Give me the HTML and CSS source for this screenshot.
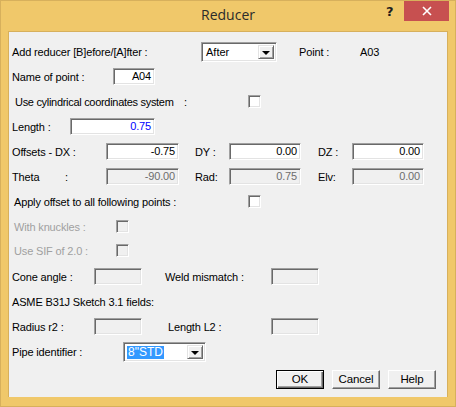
FILE: index.html
```html
<!DOCTYPE html>
<html>
<head>
<meta charset="utf-8">
<link rel="stylesheet" href="styles.css">
</head>
<body>
<div class="window">
  <div class="titlebar">
    <div class="title-spacer"></div>
    <div class="title">Reducer</div>
    <div class="title-buttons">
      <span class="help-btn">?</span>
      <span class="close-btn">
        <svg width="10" height="10" viewBox="0 0 10 10"><path d="M1 1 L9 9 M9 1 L1 9" stroke="#fff" stroke-width="1.6" fill="none"/></svg>
      </span>
    </div>
  </div>
  <div class="client">
    <div class="row row-first">
      <span class="lbl w-add">Add reducer [B]efore/[A]fter :</span>
      <div class="combo combo-after">
        <span class="combo-text">After</span>
        <span class="combo-btn"><span class="arrow"></span></span>
      </div>
      <span class="lbl w-point">Point :</span>
      <span class="lbl">A03</span>
    </div>
    <div class="row row-gap6">
      <span class="lbl w-name">Name of point :</span>
      <div class="field w-42">A04</div>
    </div>
    <div class="row row-cyl">
      <span class="lbl w-cyl">Use cylindrical coordinates system</span>
      <span class="lbl w-cylcolon">:</span>
      <span class="check"></span>
    </div>
    <div class="row">
      <span class="lbl w-length">Length :</span>
      <div class="field w-85 blue">0.75</div>
    </div>
    <div class="row">
      <span class="lbl w-dx">Offsets - DX :</span>
      <div class="field w-73">-0.75</div>
      <span class="lbl w-dy">DY :</span>
      <div class="field w-72">0.00</div>
      <span class="lbl w-dz">DZ :</span>
      <div class="field w-72">0.00</div>
    </div>
    <div class="row">
      <span class="lbl w-theta">Theta</span>
      <span class="lbl w-thetacolon">:</span>
      <div class="field w-73 disabled">-90.00</div>
      <span class="lbl w-dy">Rad:</span>
      <div class="field w-72 disabled">0.75</div>
      <span class="lbl w-dz">Elv:</span>
      <div class="field w-72 disabled">0.00</div>
    </div>
    <div class="row row-indent">
      <span class="lbl w-apply">Apply offset to all following points :</span>
      <span class="check"></span>
    </div>
    <div class="row row-indent">
      <span class="lbl gray w-knuckle">With knuckles :</span>
      <span class="check check-disabled"></span>
    </div>
    <div class="row row-indent row-gap7">
      <span class="lbl gray w-knuckle">Use SIF of 2.0 :</span>
      <span class="check check-disabled"></span>
    </div>
    <div class="row row-gap9">
      <span class="lbl w-cone">Cone angle :</span>
      <div class="field w-48 disabled"></div>
      <span class="lbl w-weld">Weld mismatch :</span>
      <div class="field w-48 disabled"></div>
    </div>
    <div class="row">
      <span class="lbl">ASME B31J Sketch 3.1 fields:</span>
    </div>
    <div class="row">
      <span class="lbl w-cone">Radius r2 :</span>
      <div class="field w-48 disabled"></div>
      <span class="lbl w-l2">Length L2 :</span>
      <div class="field w-48 disabled"></div>
    </div>
    <div class="row row-combo row-gap7">
      <span class="lbl w-pipe">Pipe identifier :</span>
      <div class="combo combo-pipe">
        <span class="combo-text"><span class="selected">8"STD</span></span>
        <span class="combo-btn"><span class="arrow"></span></span>
      </div>
    </div>
    <div class="buttons">
      <div class="btn btn-default">OK</div>
      <div class="btn">Cancel</div>
      <div class="btn">Help</div>
    </div>
  </div>
</div>
</body>
</html>
```
FILE: styles.css
```css
html, body {
  margin: 0;
  padding: 0;
  background: #ffffff;
}
.window {
  width: 456px;
  height: 407px;
  box-sizing: border-box;
  background: #f0c86a;
  border: 1px solid #d7b05c;
  display: flex;
  flex-direction: column;
}
.titlebar {
  height: 29px;
  display: flex;
  align-items: flex-start;
  flex-shrink: 0;
  margin-bottom: 1px;
}
.title-spacer {
  width: 75px;
}
.title {
  flex: 1;
  text-align: center;
  font-family: "Open Sans", "Noto Sans", sans-serif;
  font-size: 14px;
  color: #2b2b2b;
  line-height: 20px;
  padding-top: 4px;
}
.title-buttons {
  display: flex;
  align-items: flex-start;
  width: 69px;
  margin-right: 6px;
}
.help-btn {
  font-family: "DejaVu Sans", sans-serif;
  font-weight: bold;
  font-size: 13px;
  color: #1e1e1e;
  width: 24px;
  text-align: left;
  padding-left: 6px;
  box-sizing: border-box;
  line-height: 16px;
  padding-top: 3px;
}
.close-btn {
  width: 45px;
  height: 20px;
  background: #c75050;
  display: flex;
  align-items: center;
  justify-content: center;
}
.client {
  margin: 0 7px;
  height: 366px;
  box-sizing: border-box;
  background: #f0f0f0;
  border: 1px solid #d7b05c;
  border-bottom: none;
  display: flex;
  flex-direction: column;
  font-family: "Liberation Sans", Arial, sans-serif;
  font-size: 11px;
  letter-spacing: -0.15px;
  color: #000;
}
.row {
  display: flex;
  align-items: center;
  height: 17px;
  margin-top: 8px;
  padding-left: 3px;
  white-space: nowrap;
}
.row-first {
  height: 20px;
  margin-top: 10px;
}
.row-gap6 { margin-top: 6px; }
.row-gap7 { margin-top: 7px; }
.row-gap9 { margin-top: 9px; }
.row-combo { height: 20px; }
.row-cyl { padding-left: 6px; }
.row-indent { padding-left: 5px; }
.lbl {
  display: inline-block;
  flex-shrink: 0;
  overflow: visible;
}
.gray { color: #a0a0a0; }
.w-add { width: 189px; }
.w-point { width: 61px; margin-left: 22px; }
.w-name { width: 101px; }
.w-cyl { width: 169px; letter-spacing: -0.3px; }
.w-cylcolon { width: 64px; }
.w-length { width: 58px; }
.w-dx { width: 94px; }
.w-dy { width: 34px; margin-left: 16px; }
.w-dz { width: 34px; margin-left: 17px; }
.w-theta { width: 53px; }
.w-thetacolon { width: 41px; }
.w-apply { width: 234px; }
.w-knuckle { width: 102px; }
.w-cone { width: 82px; }
.w-weld { width: 106px; margin-left: 23px; }
.w-l2 { width: 103px; margin-left: 26px; }
.w-pipe { width: 111px; }

.field {
  height: 17px;
  box-sizing: border-box;
  background: #ffffff;
  border: 1px solid;
  border-color: #a0a0a0 #ffffff #ffffff #a0a0a0;
  box-shadow: inset 1px 1px 0 #696969, inset -1px -1px 0 #e3e3e3;
  text-align: right;
  padding-right: 3px;
  line-height: 15px;
  flex-shrink: 0;
}
.field.disabled {
  background: #f0f0f0;
  color: #6d6d6d;
}
.field.blue { color: #0000ff; }
.w-42 { width: 42px; }
.w-85 { width: 85px; }
.w-73 { width: 73px; }
.w-72 { width: 72px; }
.w-48 { width: 48px; }

.check {
  width: 13px;
  height: 13px;
  box-sizing: border-box;
  background: #ffffff;
  border: 1px solid;
  border-color: #a0a0a0 #ffffff #ffffff #a0a0a0;
  box-shadow: inset 1px 1px 0 #696969, inset -1px -1px 0 #e3e3e3;
  flex-shrink: 0;
}
.check-disabled { background: #f0f0f0; }

.combo {
  height: 20px;
  box-sizing: border-box;
  background: #ffffff;
  border: 1px solid;
  border-color: #a0a0a0 #ffffff #ffffff #a0a0a0;
  box-shadow: inset 1px 1px 0 #696969, inset -1px -1px 0 #e3e3e3;
  display: flex;
  align-items: stretch;
  padding: 2px;
  flex-shrink: 0;
}
.combo-after { width: 76px; }
.combo-pipe { width: 83px; }
.combo-text {
  flex: 1;
  display: flex;
  align-items: center;
  padding-left: 1px;
  font-size: 12px;
  letter-spacing: 0;
}
.combo-after .combo-text { font-size: 11px; padding-left: 2px; }
.selected {
  background: #3399ff;
  color: #ffffff;
  line-height: 13px;
  padding: 0 1px;
}
.combo-btn {
  width: 16px;
  box-sizing: border-box;
  background: #f0f0f0;
  border: 1px solid;
  border-color: #e3e3e3 #696969 #696969 #e3e3e3;
  box-shadow: inset 1px 1px 0 #ffffff, inset -1px -1px 0 #a0a0a0;
  display: flex;
  align-items: center;
  justify-content: center;
}
.arrow {
  width: 0;
  height: 0;
  border-left: 4px solid transparent;
  border-right: 4px solid transparent;
  border-top: 4px solid #000;
  margin-top: 1px;
}
.buttons {
  display: flex;
  justify-content: flex-end;
  gap: 8px;
  margin-top: 8px;
  padding-right: 11px;
}
.btn {
  width: 48px;
  height: 19px;
  box-sizing: border-box;
  background: #f0f0f0;
  border: 1px solid;
  border-color: #ffffff #696969 #696969 #ffffff;
  box-shadow: inset -1px -1px 0 #a0a0a0;
  text-align: center;
  line-height: 16px;
  font-size: 11.5px;
}
.btn-default {
  border-color: #000;
  box-shadow: inset 1px 1px 0 #ffffff, inset -1px -1px 0 #696969, inset -2px -2px 0 #a0a0a0;
}
```
